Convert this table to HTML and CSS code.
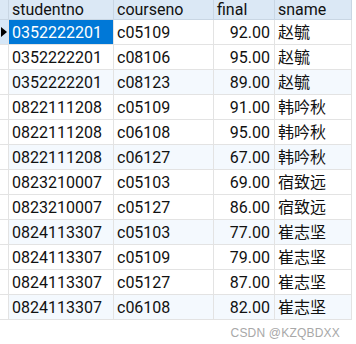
FILE: index.html
```html
<!DOCTYPE html>
<html>
<head>
<meta charset="utf-8">
<link rel="stylesheet" href="styles.css">
</head>
<body>
<div class="grid">
  <div class="c g hd"></div><div class="c hd">studentno</div><div class="c hd">courseno</div><div class="c hd">final</div><div class="c hd">sname</div>

  <div class="c g gs"><span class="tri"></span></div><div class="c sel">0352222201</div><div class="c">c05109</div><div class="c r">92.00</div><div class="c">赵毓</div>
  <div class="c g"></div><div class="c">0352222201</div><div class="c">c08106</div><div class="c r">95.00</div><div class="c">赵毓</div>
  <div class="c g"></div><div class="c alt">0352222201</div><div class="c alt">c08123</div><div class="c r alt">89.00</div><div class="c alt">赵毓</div>
  <div class="c g"></div><div class="c">0822111208</div><div class="c">c05109</div><div class="c r">91.00</div><div class="c">韩吟秋</div>
  <div class="c g"></div><div class="c">0822111208</div><div class="c">c06108</div><div class="c r">95.00</div><div class="c">韩吟秋</div>
  <div class="c g"></div><div class="c alt">0822111208</div><div class="c alt">c06127</div><div class="c r alt">67.00</div><div class="c alt">韩吟秋</div>
  <div class="c g"></div><div class="c">0823210007</div><div class="c">c05103</div><div class="c r">69.00</div><div class="c">宿致远</div>
  <div class="c g"></div><div class="c">0823210007</div><div class="c">c05127</div><div class="c r">86.00</div><div class="c">宿致远</div>
  <div class="c g"></div><div class="c alt">0824113307</div><div class="c alt">c05103</div><div class="c r alt">77.00</div><div class="c alt">崔志坚</div>
  <div class="c g"></div><div class="c">0824113307</div><div class="c">c05109</div><div class="c r">79.00</div><div class="c">崔志坚</div>
  <div class="c g"></div><div class="c">0824113307</div><div class="c">c05127</div><div class="c r">87.00</div><div class="c">崔志坚</div>
  <div class="c g"></div><div class="c alt">0824113307</div><div class="c alt">c06108</div><div class="c r alt">82.00</div><div class="c alt">崔志坚</div>
</div>
<div class="mark">CSDN @KZQBDXX</div>
</body>
</html>
```

FILE: styles.css
```css
html, body {
  margin: 0;
  padding: 0;
  background: #ffffff;
}
body {
  width: 356px;
  height: 344px;
  overflow: hidden;
  font-family: Roboto, "Noto Sans CJK SC", sans-serif;
}
.grid {
  display: grid;
  grid-template-columns: 9px 105px 100px 61px 77px;
  grid-template-rows: 20px repeat(12, 25px);
  width: 352px;
}
.c {
  box-sizing: border-box;
  border-right: 1px solid #e3e3e3;
  border-bottom: 1px solid #e3e3e3;
  font-size: 16px;
  line-height: 19px;
  color: #111;
  padding: 0 2px 0 3px;
  display: flex;
  align-items: center;
  white-space: nowrap;
}
.hd {
  background: #dbe8f5;
  border-right-color: #c9d6e3;
  border-bottom-color: #c9d6e3;
  align-items: flex-start;
  padding-top: 0;
}
.g {
  padding: 0;
}
.gs {
  background: #d6e7f7;
}
.tri {
  width: 0;
  height: 0;
  border-top: 5px solid transparent;
  border-bottom: 5px solid transparent;
  border-left: 6px solid #000;
  margin-left: 1px;
}
.sel {
  background: #0078d7;
  color: #ffffff;
}
.alt {
  background: #f4f9fe;
}
.r {
  justify-content: flex-end;
  padding-right: 4px;
}
.mark {
  font-family: "Liberation Sans", Arial, sans-serif;
  font-size: 12px;
  color: #a8a8a8;
  text-align: right;
  width: 340px;
  margin-top: 6px;
  letter-spacing: 0.2px;
}
```
